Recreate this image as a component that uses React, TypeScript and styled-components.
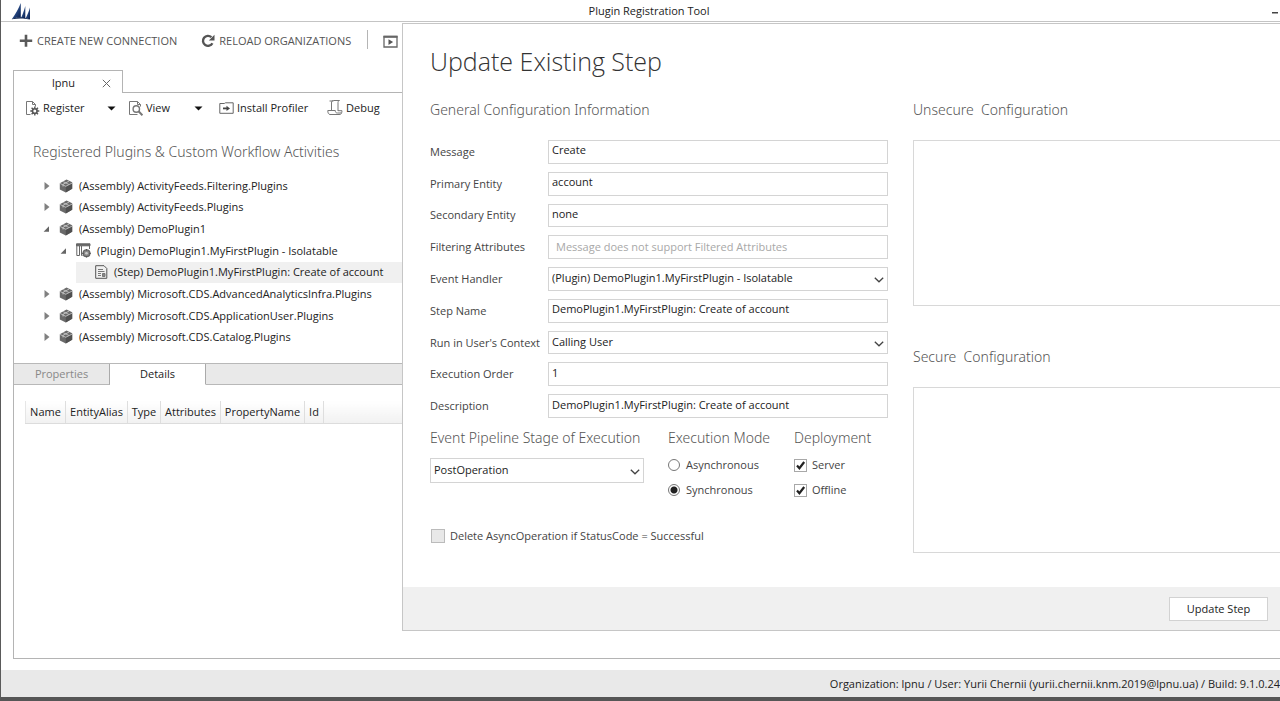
import React from "react";
import styled, { createGlobalStyle } from "styled-components";

const GlobalStyle = createGlobalStyle`
  *, *::before, *::after { box-sizing: border-box; }
  html, body, #root { height: 100%; }
  body {
    margin: 0;
    overflow: hidden;
    background: #fff;
    color: #222;
    font-family: "Open Sans", "Noto Sans", sans-serif;
    font-size: 11px;
    line-height: 16px;
  }
  button, input, select, textarea { font: inherit; color: inherit; }
  h1, h2, h3 { margin: 0; font-weight: 300; }
`;

const Window = styled.div`
  position: relative;
  display: flex;
  flex-direction: column;
  min-height: 100%;
  border-left: 1px solid #5a5a5a;
  border-bottom: 4px solid #565656;
`;

const TitleBar = styled.header`
  display: grid;
  grid-template-columns: 1fr auto 1fr;
  align-items: center;
  height: 22px;
  padding: 0 1px 0 10px;
  border-bottom: 1px solid #c4c4c4;
`;

const AppTitle = styled.span`
  padding-left: 8px;
`;

const PlainButton = styled.button`
  display: inline-flex;
  align-items: center;
  padding: 0;
  border: 0;
  background: none;
  white-space: nowrap;
`;

const MinimizeButton = styled(PlainButton)`
  justify-self: end;
`;

const CommandBar = styled.nav`
  display: flex;
  align-items: center;
  height: 38px;
  padding-left: 18px;
  color: #555;
`;

const Command = styled(PlainButton)`
  gap: 4px;
  margin-right: 24px;
`;

const CommandDivider = styled.span`
  width: 1px;
  height: 19px;
  margin: 0 15px 4px -8px;
  background: #b5b5b5;
`;

const Workspace = styled.main`
  display: flex;
  flex-direction: column;
  flex: 1;
  margin: 10px 0 11px 12px;
`;

const OrgTabs = styled.div`
  display: flex;
  height: 23px;
`;

const OrgTab = styled.div`
  display: flex;
  align-items: center;
  justify-content: space-between;
  width: 110px;
  padding: 2px 11px 0 38px;
  border: 1px solid #b4b4b4;
  border-bottom: 0;
`;

const OrgTabRest = styled.div`
  flex: 1;
  border-bottom: 1px solid #b4b4b4;
`;

const OrgPanel = styled.section`
  flex: 1;
  border-left: 1px solid #b4b4b4;
  border-bottom: 1px solid #b4b4b4;
`;

const PanelTools = styled.div`
  display: grid;
  grid-template-columns: 103px 90px 108px auto;
  justify-content: start;
  align-items: center;
  height: 30px;
  padding-left: 12px;
`;

const SplitButton = styled.div`
  display: flex;
  justify-content: space-between;
  padding-right: 13px;
  &:nth-child(2) { padding-right: 16px; }
`;

const ToolButton = styled(PlainButton)`
  gap: 3px;
`;

const SectionTitle = styled.h2`
  font-family: "Noto Sans", "Open Sans", sans-serif;
  font-weight: 300;
  font-size: 14px;
  line-height: 20px;
  color: #555;
  white-space: pre;
`;

const PanelTitle = styled(SectionTitle)`
  padding: 19px 0 13px 19px;
`;

const Tree = styled.ul`
  display: flex;
  flex-direction: column;
  height: 173px;
  margin: 0 0 15px;
  padding: 0;
  list-style: none;
`;

const TreeRow = styled.li<{ $level: number }>`
  display: flex;
  flex: 1;
  align-items: center;
  padding-left: ${(p) => 29 + p.$level * 17}px;
  white-space: nowrap;
`;

const TreeToggle = styled(PlainButton)`
  width: 16px;
`;

const TreeItem = styled.span<{ $selected?: boolean }>`
  display: flex;
  align-items: center;
  align-self: stretch;
  flex: 1;
  gap: 6px;
  ${(p) => p.$selected && "margin-left: -17px; padding-left: 19px; background: #f0f0f0;"}
`;

const DetailTabs = styled.div`
  display: flex;
  height: 22px;
  background: #e9e9e9;
  border-top: 1px solid #b8b8b8;
`;

const DetailTab = styled.button<{ $active?: boolean }>`
  width: 96px;
  padding: 0;
  border: 0;
  border-right: 1px solid #aaa;
  border-bottom: 1px solid ${(p) => (p.$active ? "#fff" : "#b8b8b8")};
  background: ${(p) => (p.$active ? "#fff" : "transparent")};
  color: ${(p) => (p.$active ? "#222" : "#888")};
`;

const DetailTabRest = styled.div`
  flex: 1;
  border-bottom: 1px solid #b8b8b8;
`;

const Properties = styled.table`
  width: calc(100% - 11px);
  margin: 16px 0 0 11px;
  table-layout: fixed;
  border-collapse: collapse;
`;

const PropertyHead = styled.th<{ $width?: number }>`
  width: ${(p) => (p.$width ? `${p.$width}px` : "auto")};
  height: 22px;
  padding: 0;
  border-right: 1px solid #dedede;
  border-bottom: 1px solid #dcdcdc;
  background: linear-gradient(#fff, #f1f1f1);
  font-weight: 400;
  white-space: nowrap;
  &:first-child { border-left: 1px solid #e6e6e6; }
`;

const StatusBar = styled.footer`
  display: flex;
  align-items: center;
  justify-content: flex-end;
  height: 27px;
  background: #e9e9e9;
  white-space: nowrap;
`;

/* The dialog lies over the workspace and runs to the window's right edge. */
const Dialog = styled.section`
  position: absolute;
  top: 23px;
  left: 401px;
  right: 0;
  border: 1px solid #c6c6c6;
  border-right: 0;
  background: #fff;
`;

const DialogTitle = styled.h1`
  padding: 20px 0 22px 27px;
  font-size: 25px;
  line-height: 34px;
  color: #333;
`;

const DialogBody = styled.div`
  display: grid;
  grid-template-columns: 458px 1fr;
  gap: 25px;
  padding: 0 0 34px 27px;
`;

const FieldGrid = styled.div`
  display: grid;
  grid-template-columns: 118px 1fr;
  grid-auto-rows: 1fr;
  gap: 8px 0;
  height: 278px;
  margin: 20px 0 10px;
`;

const FieldLabel = styled.label`
  align-self: center;
  color: #444;
  white-space: nowrap;
`;

const TextField = styled.input`
  width: 100%;
  min-height: 0;
  padding: 0 3px 3px;
  border: 1px solid #d4d4d4;
  background: #fff;
  &::placeholder { color: #a8a8a8; opacity: 1; }
  &:placeholder-shown { padding: 0 7px; }
`;

const SelectBox = styled.div`
  display: grid;
  grid-template: minmax(0, 1fr) / minmax(0, 1fr);
  align-items: center;
  min-height: 0;
  > * { grid-area: 1 / 1; }
  > svg { justify-self: end; margin: 2px 4px 0 0; pointer-events: none; }
`;

const Select = styled.select`
  appearance: none;
  width: 100%;
  height: 100%;
  padding: 0 20px 1px 3px;
  border: 1px solid #d4d4d4;
  background: #fff;
`;

const Options = styled.div`
  display: grid;
  grid-template-columns: 214px 102px 1fr;
  column-gap: 24px;
  height: 65px;
`;

const OptionGroup = styled.fieldset`
  min-width: 0;
  margin: 0;
  padding: 0;
  border: 0;
`;

const OptionTitle = styled(SectionTitle).attrs({ as: "legend" })`
  padding: 0;
`;

const StageSelect = styled(SelectBox)`
  height: 25px;
  margin-top: 10px;
`;

const ChoiceList = styled.div`
  display: grid;
  gap: 9px;
  margin-top: 9px;
`;

const Choice = styled.label<{ $gap?: number }>`
  display: flex;
  align-items: center;
  gap: ${(p) => p.$gap ?? 5}px;
  color: #444;
  white-space: nowrap;
`;

const Radio = styled.input.attrs({ type: "radio" })`
  appearance: none;
  width: 12px;
  height: 12px;
  margin: 0;
  border: 1px solid #777;
  border-radius: 50%;
  background: #fff;
  &:checked { background: radial-gradient(circle, #222 0 3px, #fff 4px); }
`;

const CheckFrame = styled.span`
  display: grid;
  > * { grid-area: 1 / 1; }
  > svg { pointer-events: none; }
`;

const Check = styled.input.attrs({ type: "checkbox" })`
  appearance: none;
  width: 13px;
  height: 13px;
  margin: 0;
  border: 1px solid #a8a8a8;
  background: #fff;
  &:disabled { width: 14px; height: 14px; border-color: #bbb; background: #e8e8e8; }
`;

const DeleteOption = styled(Choice)`
  margin: 35px 0 0 1px;
`;

const ConfigText = styled.textarea`
  display: block;
  width: 100%;
  height: 166px;
  margin: 20px 0 41px;
  border: 1px solid #d8d8d8;
  border-right: 0;
  resize: none;
  &:last-child { margin-bottom: 0; }
`;

const DialogFooter = styled.div`
  display: flex;
  justify-content: flex-end;
  padding: 10px 12px 9px;
  background: #f0f0f0;
`;

const UpdateButton = styled.button`
  width: 99px;
  height: 24px;
  padding: 0;
  border: 1px solid #d2d2d2;
  background: #fff;
`;

const Chevron = () => (
  <svg width="10" height="6" viewBox="0 0 10 6" fill="none" stroke="#444" strokeWidth="1.3" aria-hidden="true">
    <path d="M.8.8 5 4.8 9.2.8" />
  </svg>
);

const Caret = () => (
  <svg width="9" height="5" viewBox="0 0 9 5" aria-hidden="true"><path d="M.5.5h8l-4 4z" fill="#111" /></svg>
);

const Tick = () => (
  <svg width="13" height="13" viewBox="0 0 13 13" fill="none" stroke="#222" strokeWidth="2.2" aria-hidden="true">
    <path d="M3 6.5 5.4 9.2 10.2 3" />
  </svg>
);

const Logo = () => (
  <svg width="20" height="18" viewBox="0 0 20 18" aria-hidden="true">
    <defs>
      <linearGradient id="sail" x1="0" x2="1" y1="0" y2="1">
        <stop stopColor="#5c7fb2" /><stop offset=".6" stopColor="#1f3f78" /><stop offset="1" stopColor="#061a45" />
      </linearGradient>
    </defs>
    <path d="M9.800 1v14.800C6.500 15.300 4 15.900.8 17.200 4.200 12.500 7.600 6.500 9.800 1Z" fill="url(#sail)" />
    <path d="M14.300 4v12.600c-1.500-.6-2.800-.8-4.200-.8 1.700-3.500 3.100-7.800 4.200-11.800Z" fill="url(#sail)" />
    <path d="M19 5.500v12c-1.500-.7-2.900-1-4.500-1 1.800-3.400 3.300-6.900 4.500-11Z" fill="url(#sail)" />
    <path d="M.8 17.200c3.200-1.700 6-2.200 9-1.900 3.500.2 6.500 1 9.200 2.200-4-.9-10.800-1.600-18.200-.3Z" fill="#0a214f" />
  </svg>
);

const PlusIcon = () => (
  <svg width="14" height="14" viewBox="0 0 14 14" fill="none" stroke="#5a5a5a" strokeWidth="2.600" aria-hidden="true">
    <path d="M7 .8v12M.8 6.800h12.400" />
  </svg>
);

const ReloadIcon = () => (
  <svg width="14" height="14" viewBox="0 0 14 14" aria-hidden="true">
    <path d="M11.400 9.200A5 5 0 1 1 10.400 3.200" fill="none" stroke="#555" strokeWidth="2.400" />
    <path d="M13.500 .8v5.700H7.800z" fill="#555" />
  </svg>
);

const PlayIcon = () => (
  <svg width="15" height="13" viewBox="0 0 15 13" aria-hidden="true">
    <path d="M1 1.500h13v10.500H1z" fill="none" stroke="#666" strokeWidth="1.300" />
    <path d="M.5 .8h14v2H.5z" fill="#666" />
    <path d="M5.500 4.300v5.600l4.600-2.800z" fill="#555" />
  </svg>
);

const RegisterIcon = () => (
  <svg width="14" height="15" viewBox="0 0 14 15" fill="none" stroke="#555" aria-hidden="true">
    <path d="M4.500 13.500h-4V.5h6l3 3v2M6.500.5v3h3" stroke="#777" />
    <circle cx="8.800" cy="10" r="2.300" strokeWidth="1.600" />
    <path d="M8.800 5.500v2M8.800 12.500v2M4.300 10h2M11.300 10h2M5.600 6.800l1.500 1.500M10.500 11.700 12 13.200M12 6.800l-1.500 1.500M7.100 11.700 5.600 13.200" strokeWidth="1.400" />
  </svg>
);

const ViewIcon = () => (
  <svg width="14" height="15" viewBox="0 0 14 15" fill="none" stroke="#777" aria-hidden="true">
    <path d="M11.500 5.500v-2l-3-3h-8v13h8M8.500.5v3h3" />
    <circle cx="7.300" cy="8" r="3.200" strokeWidth="1.400" />
    <path d="m9.600 10.300 3.800 4" strokeWidth="2" />
  </svg>
);

const ProfilerIcon = () => (
  <svg width="15" height="12" viewBox="0 0 15 12" fill="none" stroke="#666" aria-hidden="true">
    <path d="M.8 1.500h4.500l1.200-.7h7.700V11.300H.8z" />
    <path d="M4 6.400h4.500" stroke="#444" strokeWidth="1.800" />
    <path d="M7.500 3.700v5.400l3.500-2.700z" fill="#444" stroke="none" />
  </svg>
);

const DebugIcon = () => (
  <svg width="16" height="16" viewBox="0 0 16 16" fill="none" stroke="#777" aria-hidden="true">
    <path d="M4.500 10.500V3c0-1.600.6-2.500 2-2.500h6c-1.200.3-1.500 1-1.500 2v8.500M2.500 1h4" />
    <path d="M.8 10.500h7.500c0 1.800.8 2.500 2 2.500h2.700c1.500 0 2-.8 2-2.300h-4" />
    <path d="M3 14.500h9c1.500 0 2.400-.6 3-1.800M.8 10.500c0 2.300.6 4 2.400 4" />
  </svg>
);

const AssemblyIcon = () => (
  <svg width="14" height="14" viewBox="0 0 14 14" aria-hidden="true">
    <path d="M7.500.6 13.200 3.200v6.600L6.800 13.500.8 10.400V4.200z" fill="#6a6a6a" />
    <path d="M6.800 7.200 13.200 4v5.800l-6.400 3.700z" fill="#505050" />
    <path d="M.9 4.400 6.800 7.300 13.100 4.100M4.200 2.700l5.600 2.700M10.200 2 4 5.300v2.200" fill="none" stroke="#dcdcdc" strokeWidth=".7" />
  </svg>
);

const PluginIcon = () => (
  <svg width="15" height="15" viewBox="0 0 15 15" fill="none" stroke="#555" aria-hidden="true">
    <path d="M.5.8h13.500v2H.5z" fill="#666" stroke="#666" />
    <path d="M.8 2v10.500h2.700V3M6.500 12.500h-1V3M13.500 2v4" stroke="#666" />
    <circle cx="10.500" cy="10.300" r="3.400" fill="#888" stroke="#666" strokeWidth="1.200" />
    <path d="M10.500 6v1.500M10.500 13v1.500M6.200 10.300h1.500M13.300 10.300h1.500" strokeWidth="1.200" />
    <circle cx="10.500" cy="10.300" r="1.300" fill="#ccc" stroke="none" />
  </svg>
);

const StepIcon = () => (
  <svg width="13" height="14" viewBox="0 0 13 14" fill="none" stroke="#555" aria-hidden="true">
    <path d="M.7.7h8.300l2.800 2.800v9.800H.7z" />
    <path d="M3 4.500h5M3 6.500h6.500M3 8.500h3M3 10.500h3" stroke="#777" />
    <path d="M7.500 8.500h2.500v3H7.500z" fill="#888" stroke="#777" />
  </svg>
);

const Closed = () => (
  <svg width="7" height="8" viewBox="0 0 7 8" aria-hidden="true"><path d="M1.500 0v8l5-4z" fill="#808080" /></svg>
);

const Opened = () => (
  <svg width="7" height="6" viewBox="0 0 7 6" aria-hidden="true"><path d="M6 .3v5.400H.6z" fill="#666" /></svg>
);

const icons = { assembly: AssemblyIcon, plugin: PluginIcon, step: StepIcon };

type Node = { kind: keyof typeof icons; name: string; level: number; open?: boolean };

const nodes: Node[] = [
  { kind: "assembly", name: "(Assembly) ActivityFeeds.Filtering.Plugins", level: 0 },
  { kind: "assembly", name: "(Assembly) ActivityFeeds.Plugins", level: 0 },
  { kind: "assembly", name: "(Assembly) DemoPlugin1", level: 0, open: true },
  { kind: "plugin", name: "(Plugin) DemoPlugin1.MyFirstPlugin - Isolatable", level: 1, open: true },
  { kind: "step", name: "(Step) DemoPlugin1.MyFirstPlugin: Create of account", level: 2 },
  { kind: "assembly", name: "(Assembly) Microsoft.CDS.AdvancedAnalyticsInfra.Plugins", level: 0 },
  { kind: "assembly", name: "(Assembly) Microsoft.CDS.ApplicationUser.Plugins", level: 0 },
  { kind: "assembly", name: "(Assembly) Microsoft.CDS.Catalog.Plugins", level: 0 },
];

const columns: [string, number?][] = [
  ["Name", 40], ["EntityAlias", 62], ["Type", 33], ["Attributes", 60], ["PropertyName", 84], ["Id", 19],
];

type Field = { id: string; label: string; value?: string; placeholder?: string; select?: boolean };

const fields: Field[] = [
  { id: "message", label: "Message", value: "Create" },
  { id: "primary", label: "Primary Entity", value: "account" },
  { id: "secondary", label: "Secondary Entity", value: "none" },
  { id: "filtering", label: "Filtering Attributes", placeholder: "Message does not support Filtered Attributes" },
  { id: "handler", label: "Event Handler", value: "(Plugin) DemoPlugin1.MyFirstPlugin - Isolatable", select: true },
  { id: "step", label: "Step Name", value: "DemoPlugin1.MyFirstPlugin: Create of account" },
  { id: "context", label: "Run in User's Context", value: "Calling User", select: true },
  { id: "order", label: "Execution Order", value: "1" },
  { id: "description", label: "Description", value: "DemoPlugin1.MyFirstPlugin: Create of account" },
];

function CheckOption({ label }: { label: string }) {
  return (
    <Choice>
      <CheckFrame>
        <Check defaultChecked />
        <Tick />
      </CheckFrame>
      {label}
    </Choice>
  );
}

function StepDialog() {
  return (
    <Dialog role="dialog" aria-labelledby="dialog-title">
      <DialogTitle id="dialog-title">Update Existing Step</DialogTitle>
      <DialogBody>
        <div>
          <SectionTitle>General Configuration Information</SectionTitle>
          <FieldGrid>
            {fields.map((f) => (
              <React.Fragment key={f.id}>
                <FieldLabel htmlFor={f.id}>{f.label}</FieldLabel>
                {f.select ? (
                  <SelectBox>
                    <Select id={f.id}><option>{f.value}</option></Select>
                    <Chevron />
                  </SelectBox>
                ) : (
                  <TextField id={f.id} defaultValue={f.value} placeholder={f.placeholder} />
                )}
              </React.Fragment>
            ))}
          </FieldGrid>
          <Options>
            <OptionGroup>
              <OptionTitle>Event Pipeline Stage of Execution</OptionTitle>
              <StageSelect>
                <Select aria-label="Event Pipeline Stage of Execution"><option>PostOperation</option></Select>
                <Chevron />
              </StageSelect>
            </OptionGroup>
            <OptionGroup>
              <OptionTitle>Execution Mode</OptionTitle>
              <ChoiceList>
                <Choice $gap={6}><Radio name="mode" />Asynchronous</Choice>
                <Choice $gap={6}><Radio name="mode" defaultChecked />Synchronous</Choice>
              </ChoiceList>
            </OptionGroup>
            <OptionGroup>
              <OptionTitle>Deployment</OptionTitle>
              <ChoiceList>
                <CheckOption label="Server" />
                <CheckOption label="Offline" />
              </ChoiceList>
            </OptionGroup>
          </Options>
          <DeleteOption><Check disabled />Delete AsyncOperation if StatusCode = Successful</DeleteOption>
        </div>
        <div>
          <SectionTitle>{"Unsecure  Configuration"}</SectionTitle>
          <ConfigText aria-label="Unsecure Configuration" />
          <SectionTitle>{"Secure  Configuration"}</SectionTitle>
          <ConfigText aria-label="Secure Configuration" />
        </div>
      </DialogBody>
      <DialogFooter><UpdateButton type="button">Update Step</UpdateButton></DialogFooter>
    </Dialog>
  );
}

export default function App() {
  return (
    <>
      <GlobalStyle />
      <Window>
        <TitleBar>
          <Logo />
          <AppTitle>Plugin Registration Tool</AppTitle>
          <MinimizeButton aria-label="Minimize">
            <svg width="8" height="8" viewBox="0 0 8 8" aria-hidden="true"><path d="M1 5h6v1.500H1z" fill="#444" /></svg>
          </MinimizeButton>
        </TitleBar>
        <CommandBar>
          <Command><PlusIcon />CREATE NEW CONNECTION</Command>
          <Command><ReloadIcon />RELOAD ORGANIZATIONS</Command>
          <CommandDivider />
          <Command aria-label="Run"><PlayIcon /></Command>
        </CommandBar>
        <Workspace>
          <OrgTabs>
            <OrgTab>
              lpnu
              <PlainButton aria-label="Close tab">
                <svg width="9" height="9" viewBox="0 0 9 9" stroke="#666" aria-hidden="true"><path d="m.8.8 7.400 7.400M8.200.8.8 8.200" /></svg>
              </PlainButton>
            </OrgTab>
            <OrgTabRest />
          </OrgTabs>
          <OrgPanel>
            <PanelTools>
              <SplitButton>
                <ToolButton><RegisterIcon />Register</ToolButton>
                <PlainButton aria-label="Register menu"><Caret /></PlainButton>
              </SplitButton>
              <SplitButton>
                <ToolButton><ViewIcon />View</ToolButton>
                <PlainButton aria-label="View menu"><Caret /></PlainButton>
              </SplitButton>
              <ToolButton><ProfilerIcon />Install Profiler</ToolButton>
              <ToolButton><DebugIcon />Debug</ToolButton>
            </PanelTools>
            <PanelTitle>{"Registered Plugins & Custom Workflow Activities"}</PanelTitle>
            <Tree>
              {nodes.map((n) => {
                const Icon = icons[n.kind];
                const isStep = n.kind === "step";
                return (
                  <TreeRow key={n.name} $level={n.level}>
                    <TreeToggle as={isStep ? "span" : "button"} aria-label={isStep ? undefined : "Toggle"}>
                      {!isStep && (n.open ? <Opened /> : <Closed />)}
                    </TreeToggle>
                    <TreeItem $selected={isStep}><Icon />{n.name}</TreeItem>
                  </TreeRow>
                );
              })}
            </Tree>
            <DetailTabs>
              <DetailTab>Properties</DetailTab>
              <DetailTab $active>Details</DetailTab>
              <DetailTabRest />
            </DetailTabs>
            <Properties>
              <thead>
                <tr>
                  {columns.map(([name, width]) => <PropertyHead key={name} $width={width}>{name}</PropertyHead>)}
                  <PropertyHead as="td" />
                </tr>
              </thead>
            </Properties>
          </OrgPanel>
        </Workspace>
        <StatusBar>
          <span>Organization: lpnu / User: Yurii Chernii (yurii.chernii.knm.2019@lpnu.ua) / Build: 9.1.0.24</span>
        </StatusBar>
        <StepDialog />
      </Window>
    </>
  );
}
